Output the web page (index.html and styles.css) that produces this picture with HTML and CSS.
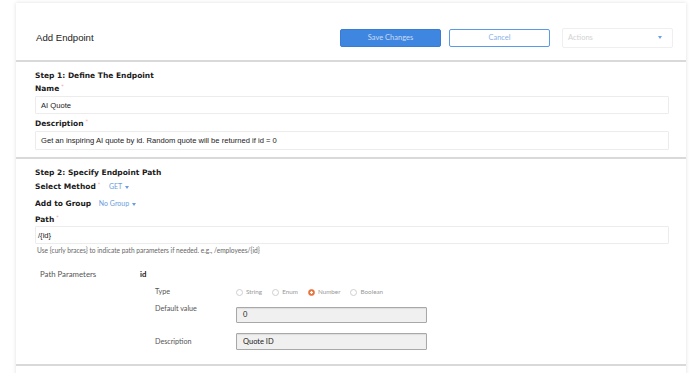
FILE: index.html
```html
<!DOCTYPE html>
<html lang="en">

<head>
  <meta charset="UTF-8">
  <title>Add Endpoint</title>
  <link rel="stylesheet" href="styles.css">
</head>

<body>
  <div class="panel">
    <header class="head">
      <h2 class="title">Add Endpoint</h2>
      <button class="btn btn-save">Save Changes</button>
      <button class="btn btn-cancel">Cancel</button>
      <div class="actions">
        <span>Actions</span>
        <span class="caret"></span>
      </div>
    </header>

    <!-- step 1 -->
    <section class="step step-one">
      <h3 class="step-title">Step 1: Define The Endpoint</h3>
      <label class="label">Name<sup>*</sup></label>
      <div class="input input-name">AI Quote</div>
      <label class="label label-desc">Description<sup>*</sup></label>
      <div class="input input-desc">Get an inspiring AI quote by id. Random quote will be returned if id = 0</div>
    </section>

    <!-- step 2 -->
    <section class="step step-two">
      <h3 class="step-title">Step 2: Specify Endpoint Path</h3>
      <div class="label label-method">Select Method<sup>*</sup> <span class="pick pick-method">GET <i class="caret"></i></span></div>
      <div class="label label-group">Add to Group <span class="pick pick-group">No Group <i class="caret"></i></span></div>
      <label class="label label-path">Path<sup>*</sup></label>
      <div class="input input-path">/{id}</div>
      <p class="help">Use {curly braces} to indicate path parameters if needed. e.g., /employees/{id}</p>

      <div class="params">
        <div class="params-title">Path Parameters</div>
        <div class="param">
          <div class="param-name">id</div>
          <div class="param-fields">
            <span class="field-label">Type</span>
            <div class="radios">
              <span class="radio"><i class="dot"></i>String</span>
              <span class="radio"><i class="dot"></i>Enum</span>
              <span class="radio"><i class="dot checked"></i>Number</span>
              <span class="radio"><i class="dot"></i>Boolean</span>
            </div>
            <span class="field-label field-top">Default value</span>
            <div class="box box-default">0</div>
            <span class="field-label">Description</span>
            <div class="box box-desc">Quote ID</div>
          </div>
        </div>
      </div>
    </section>
  </div>
</body>

</html>
```

FILE: styles.css
```css
body {
  margin: 0;
  padding: 0;
  background: #fff;
}

.panel {
  width: 670px;
  margin: 3px 0 0 16px;
  background: #fff;
  box-shadow: 0 0 4px rgba(0, 0, 0, .13);
  height: 380px;
}

/* header */
.head {
  height: 59px;
  box-sizing: border-box;
  padding: 12px 13px 0 20px;
  display: flex;
  align-items: center;
  border-bottom: 2px solid #d9d9d9;
}

.title {
  margin: 0;
  font: normal 9.6px "Liberation Sans", Arial, sans-serif;
  color: #222;
}

.btn {
  width: 101px;
  height: 18px;
  border-radius: 2px;
  font: 7.5px Lato, sans-serif;
  padding: 0;
}

.btn-save {
  margin-left: auto;
  background: #3f86e0;
  border: 1px solid #3a7cd2;
  color: #c9dcf6;
}

.btn-cancel {
  margin-left: 8px;
  background: #fff;
  border: 1px solid #5b9ae6;
  color: #8ab3ea;
}

.actions {
  margin-left: 12px;
  width: 111px;
  height: 20px;
  box-sizing: border-box;
  border: 1px solid #efefef;
  border-radius: 2px;
  display: flex;
  align-items: center;
  justify-content: space-between;
  padding: 0 10px 0 5px;
  font: 7.5px Lato, sans-serif;
  color: #d2d2d2;
}

.caret {
  display: inline-block;
  width: 0;
  height: 0;
  border-left: 2.5px solid transparent;
  border-right: 2.5px solid transparent;
  border-top: 3px solid #6fa1e4;
  vertical-align: middle;
}

/* steps */
.step {
  display: flex;
  flex-direction: column;
  padding: 8px 17px 7px 19px;
  border-bottom: 2px solid #d9d9d9;
}

.step-title {
  margin: 0;
  font: bold 7.5px/12px "DejaVu Sans", Verdana, sans-serif;
  color: #1a1a1a;
}

.label {
  margin-top: 1px;
  height: 12px;
  font: bold 7.5px/12px "DejaVu Sans", Verdana, sans-serif;
  color: #1a1a1a;
}

.label sup {
  position: relative;
  top: -3px;
  vertical-align: baseline;
  line-height: 0;
  color: #f2a0a0;
  font-weight: normal;
  font-size: 5px;
  margin-left: 2px;
}

.input {
  margin-top: 1px;
  height: 18px;
  box-sizing: border-box;
  border: 1px solid #ececec;
  border-radius: 1px;
  padding: 0 5px;
  display: flex;
  align-items: center;
  font: 7.6px "Liberation Sans", Arial, sans-serif;
  color: #222;
}

.label-desc {
  margin-top: 4px;
}

.input-desc {
  height: 19px;
}

.step-two {
  padding-bottom: 14px;
}

.label-method {
  margin-top: 2px;
}

.label-group {
  margin-top: 5px;
}

.label-path {
  margin-top: 4px;
}

.input-path {
  margin-top: 0;
  padding-left: 2px;
}

.pick {
  font: normal 7px Lato, sans-serif;
  color: #6a9de2;
  margin-left: 6px;
}

.pick-group {
  margin-left: 5px;
}

.pick .caret {
  border-top-color: #6a9de2;
  margin-left: 1px;
}

.help {
  margin: 2px 0 0 2px;
  font: 6.6px/8px Lato, sans-serif;
  color: #666;
}

/* path params */
.params {
  display: flex;
  margin-top: 15px;
  padding-left: 5px;
  font: 7.8px/10px Lato, sans-serif;
  color: #555;
}

.params-title {
  width: 100px;
}

.param-name {
  font-weight: bold;
  color: #222;
}

.param-fields {
  display: grid;
  grid-template-columns: 81px 191px;
  row-gap: 10px;
  align-items: center;
  margin: 8px 0 0 15px;
}

.field-label {
  font-size: 7.2px;
}

.field-top {
  align-self: start;
  margin-top: -3px;
}

.radios {
  display: flex;
  gap: 10px;
  font-size: 6.3px;
  color: #999;
}

.radio {
  display: flex;
  align-items: center;
}

.dot {
  width: 5px;
  height: 5px;
  border: 1px solid #cfcfcf;
  border-radius: 50%;
  margin-right: 3px;
}

.dot.checked {
  border-color: #e8733c;
  background: radial-gradient(circle, #fff 0 1px, #e8733c 1.5px);
}

.box {
  height: 16px;
  box-sizing: border-box;
  border: 1px solid #a8a8a8;
  border-radius: 1px;
  background: #f0f0f0;
  box-shadow: inset 0 1px 1px rgba(0, 0, 0, .08);
  padding: 0 6px;
  display: flex;
  align-items: center;
  font-size: 7.5px;
  color: #222;
}

.box-desc {
  height: 17px;
}
```
